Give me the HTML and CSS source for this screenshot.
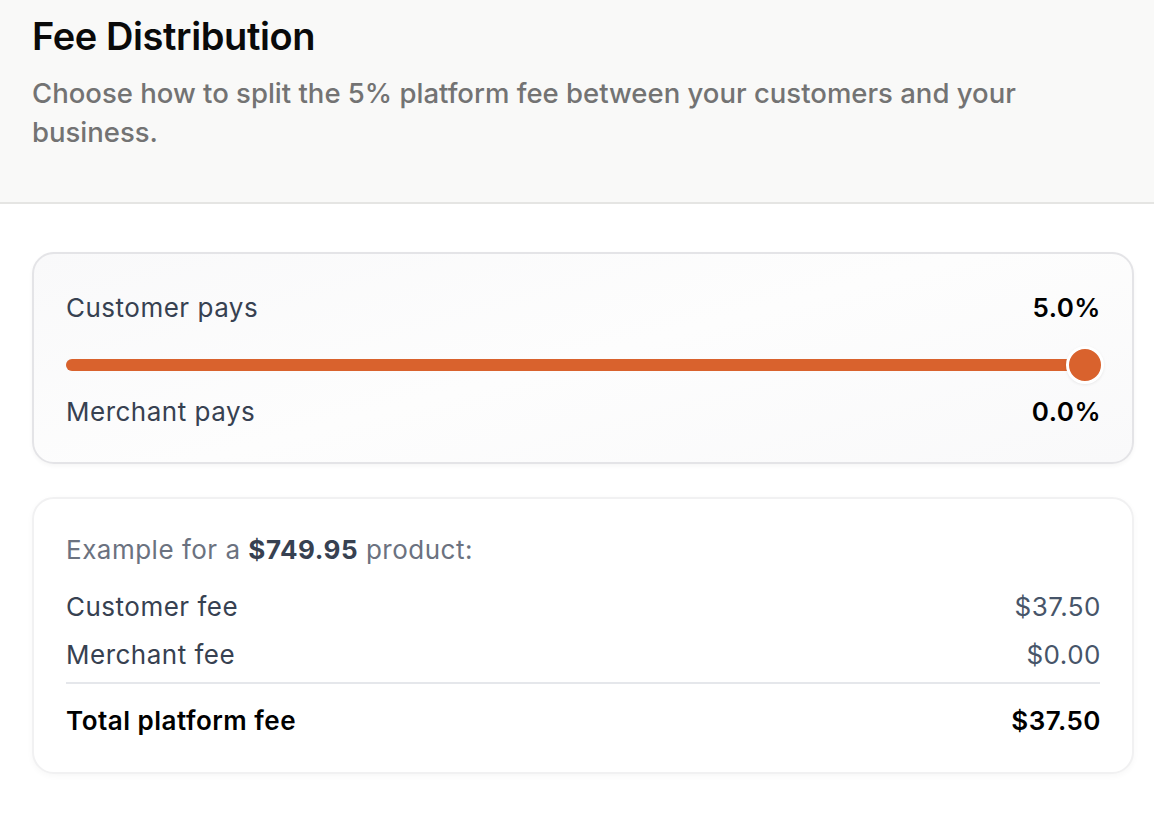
FILE: index.html
```html
<!DOCTYPE html>
<html lang="en">
<head>
<meta charset="utf-8">
<title>Fee Distribution</title>
<link rel="stylesheet" href="styles.css">
</head>
<body>
<header class="header">
  <h1 class="title">Fee Distribution</h1>
  <p class="subtitle">Choose how to split the 5% platform fee between your customers and your business.</p>
</header>
<main class="content">
  <section class="card split-card">
    <div class="row">
      <span class="label">Customer pays</span>
      <span class="pct">5.0%</span>
    </div>
    <div class="slider">
      <div class="track"><div class="fill" style="width:100%"></div></div>
      <div class="thumb"></div>
    </div>
    <div class="row">
      <span class="label">Merchant pays</span>
      <span class="pct">0.0%</span>
    </div>
  </section>
  <section class="card example-card">
    <p class="example">Example for a <strong>$749.95</strong> product:</p>
    <div class="row fee-row first">
      <span class="label">Customer fee</span>
      <span class="amount">$37.50</span>
    </div>
    <div class="row fee-row">
      <span class="label">Merchant fee</span>
      <span class="amount">$0.00</span>
    </div>
    <div class="divider"></div>
    <div class="row total-row">
      <span>Total platform fee</span>
      <span class="total-value">$37.50</span>
    </div>
  </section>
</main>
</body>
</html>
```
FILE: styles.css
```css
* { box-sizing: border-box; }
html, body { margin: 0; padding: 0; background: #ffffff; }
body {
  font-family: Inter, "Noto Sans", "Liberation Sans", sans-serif;
  color: #000;
}
.header {
  background: #f9f9f8;
  border-bottom: 2px solid #e5e5e3;
  padding: 14px 32px 50px;
}
.title {
  margin: 0;
  font-size: 38px;
  line-height: 44px;
  font-weight: 600;
  letter-spacing: -0.4px;
  color: #0a0a0a;
}
.subtitle {
  margin: 16px 0 0;
  max-width: 1040px;
  font-size: 27.5px;
  line-height: 39px;
  font-weight: 500;
  color: #737373;
}
.content {
  padding: 48px 20px 40px 32px;
  display: flex;
  flex-direction: column;
  gap: 33px;
}
.card {
  border-radius: 22px;
  padding: 0 32px;
}
.split-card {
  border: 2px solid #e4e4e7;
  background: linear-gradient(165deg, #f9f9fa 0%, #fdfdfd 50%, #f9f9fa 100%);
  box-shadow: 0 2px 4px rgba(0,0,0,0.04);
  padding-top: 36px;
  padding-bottom: 32px;
}
.row {
  display: flex;
  justify-content: space-between;
  align-items: center;
  font-size: 26px;
  line-height: 36px;
  letter-spacing: 0.5px;
}
.label { color: #374151; }
.pct { font-weight: 600; color: #000; margin-right: -1px; }
.slider {
  position: relative;
  height: 32px;
  margin: 23px 0 13px;
  display: flex;
  align-items: center;
}
.track {
  flex: 1;
  height: 12px;
  margin-right: 15px;
  border-radius: 6px;
  background: #e5e7eb;
}
.fill {
  height: 100%;
  border-radius: 6px;
  background: #d9622d;
}
.thumb {
  position: absolute;
  right: -4px;
  top: -3px;
  width: 38px;
  height: 38px;
  border-radius: 50%;
  background: #d9622d;
  border: 3px solid #ffffff;
  box-shadow: 0 1px 3px rgba(0,0,0,0.08);
}
.example-card {
  border: 2px solid #f1f1f2;
  background: #ffffff;
  box-shadow: 0 2px 6px rgba(0,0,0,0.035);
  padding-top: 33px;
  padding-bottom: 33px;
}
.example {
  margin: 0;
  font-size: 26px;
  line-height: 36px;
  letter-spacing: 0.5px;
  color: #6b7280;
}
.example strong { color: #374151; font-weight: 700; }
.fee-row.first { margin-top: 21px; }
.fee-row + .fee-row { margin-top: 12px; }
.amount { color: #475569; margin-right: -1px; }
.divider {
  height: 2px;
  background: #e5e7eb;
  margin: 9px 0 19px;
}
.total-row { font-weight: 600; color: #000; }
.total-value { margin-right: -1px; }
```
